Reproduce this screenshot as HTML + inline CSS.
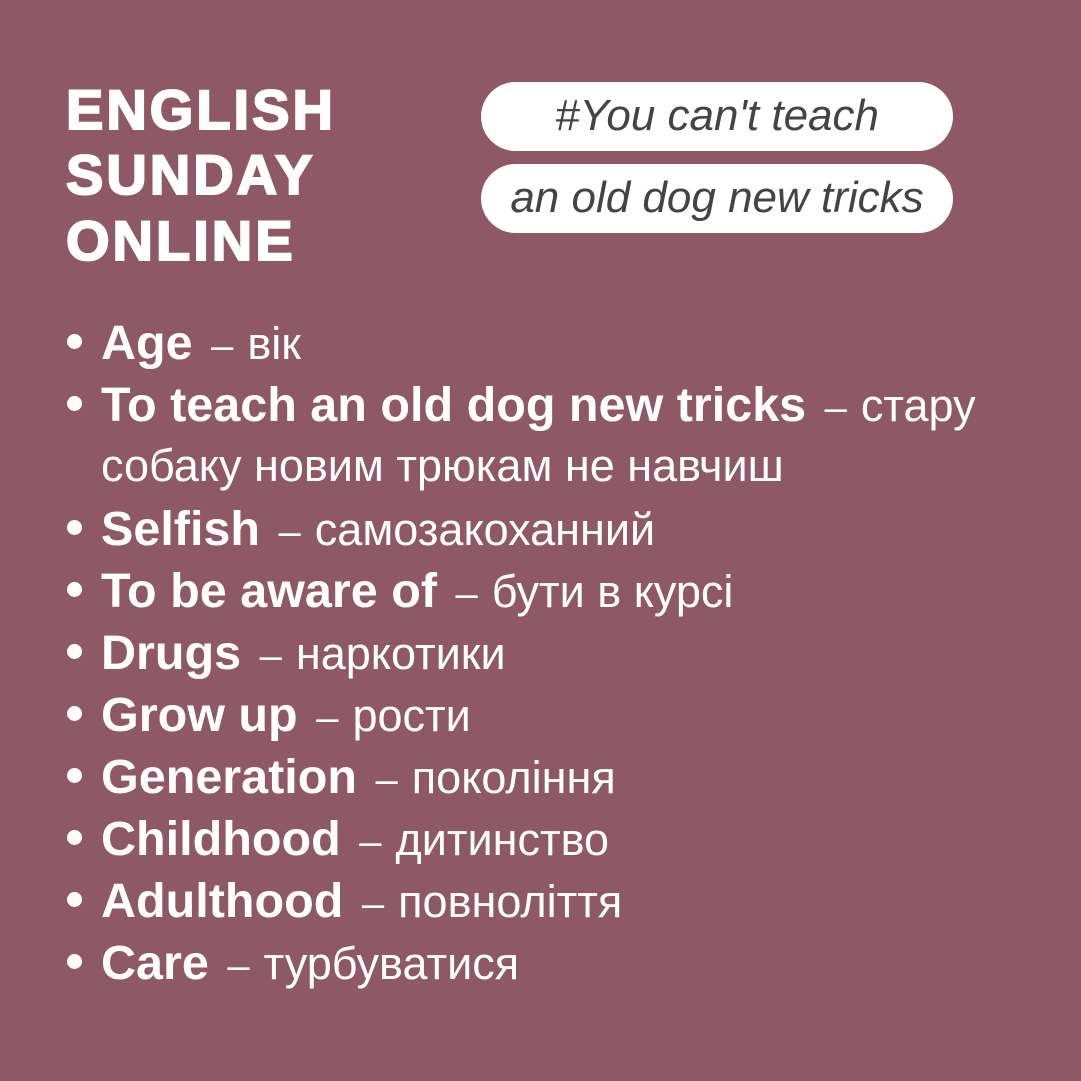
<!DOCTYPE html>
<html><head><meta charset="utf-8"><style>
html,body{margin:0;padding:0}
body{width:1081px;height:1081px;background:#8e5866;position:relative;overflow:hidden;font-family:"Liberation Sans",sans-serif;color:#fff}
.t{position:absolute;left:66px;font-weight:bold;font-size:56px;letter-spacing:3px;line-height:1;-webkit-text-stroke:2px #fff}
.pill{position:absolute;left:481px;width:472px;height:69px;border-radius:35px;background:#fff;color:#444;font-style:italic;font-size:44px;text-align:center;line-height:67px;letter-spacing:0px}
.l{position:absolute;left:101px;font-size:45px;white-space:nowrap;line-height:1}
.l b{font-size:48.5px}
.l .d{margin:0 14px 0 6px;font-size:40px}
.l::before{content:"";position:absolute;left:-34px;top:15px;width:15px;height:15px;border-radius:50%;background:#fff}
.l.n::before{display:none}
</style></head><body>
<div class="t" style="top:82px">ENGLISH</div>
<div class="t" style="top:147px">SUNDAY</div>
<div class="t" style="top:213px">ONLINE</div>
<div class="pill" style="top:82px">#You can't teach</div>
<div class="pill" style="top:164px">an old dog new tricks</div>
<div class="l" style="top:319px"><b>Age</b> <span class="d">–</span>вік</div>
<div class="l" style="top:381px"><b>To teach an old dog new tricks</b> <span class="d">–</span>стару</div>
<div class="l n" style="top:443px">собаку новим трюкам не навчиш</div>
<div class="l" style="top:505px"><b>Selfish</b> <span class="d">–</span>самозакоханний</div>
<div class="l" style="top:567px"><b>To be aware of</b> <span class="d">–</span>бути в курсі</div>
<div class="l" style="top:629px"><b>Drugs</b> <span class="d">–</span>наркотики</div>
<div class="l" style="top:691px"><b>Grow up</b> <span class="d">–</span>рости</div>
<div class="l" style="top:753px"><b>Generation</b> <span class="d">–</span>покоління</div>
<div class="l" style="top:815px"><b>Childhood</b> <span class="d">–</span>дитинство</div>
<div class="l" style="top:877px"><b>Adulthood</b> <span class="d">–</span>повноліття</div>
<div class="l" style="top:939px"><b>Care</b> <span class="d">–</span>турбуватися</div>
</body></html>
